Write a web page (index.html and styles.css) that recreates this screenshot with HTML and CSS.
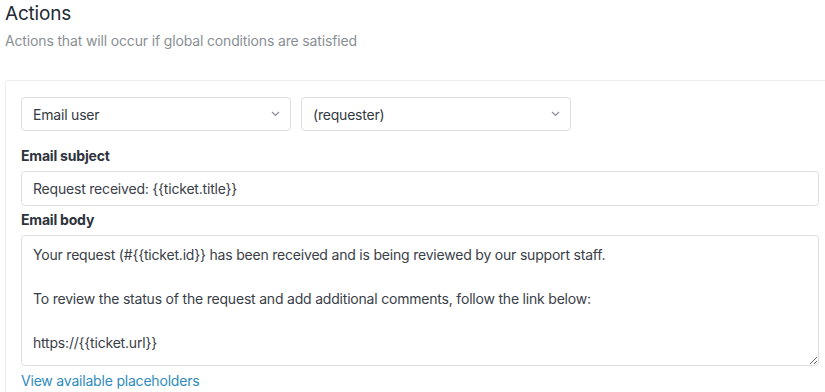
FILE: index.html
```html
<!DOCTYPE html>
<html>
<head>
<meta charset="utf-8">
<link rel="stylesheet" href="styles.css">
</head>
<body>
<div class="page">
  <h2 class="title">Actions</h2>
  <p class="subtitle">Actions that will occur if global conditions are satisfied</p>
  <div class="card">
    <div class="selects">
      <div class="select"><span>Email user</span><svg class="chev" width="9" height="6" viewBox="0 0 9 6"><path d="M1 1l3.5 3.5L8 1" fill="none" stroke="#8a8f96" stroke-width="1.2"/></svg></div>
      <div class="select"><span>(requester)</span><svg class="chev" width="9" height="6" viewBox="0 0 9 6"><path d="M1 1l3.5 3.5L8 1" fill="none" stroke="#8a8f96" stroke-width="1.2"/></svg></div>
    </div>
    <label class="label">Email subject</label>
    <div class="input">Request received: {{ticket.title}}</div>
    <label class="label">Email body</label>
    <textarea class="textarea">Your request (#{{ticket.id}} has been received and is being reviewed by our support staff.

To review the status of the request and add additional comments, follow the link below:

https://{{ticket.url}}</textarea>
    <a class="link" href="#">View available placeholders</a>
  </div>
</div>
</body>
</html>
```
FILE: styles.css
```css
html, body {
  margin: 0;
  padding: 0;
  overflow: hidden;
  background: #fff;
}
body {
  font-family: Inter, "Liberation Sans", sans-serif;
  color: #333a42;
  letter-spacing: -0.2px;
}
.page {
  padding: 0 0 0 5px;
  width: 830px;
}
.title {
  margin: 0;
  padding-top: 2px;
  font-size: 19px;
  font-weight: 400;
  line-height: 24px;
  color: #222a33;
}
.subtitle {
  margin: 6px 0 0;
  font-size: 14px;
  line-height: 18px;
  color: #8a8f95;
  letter-spacing: -0.15px;
}
.card {
  margin-top: 30px;
  border: 1px solid #ececec;
  border-radius: 3px;
  padding: 16px 15px 0;
  height: 330px;
}
.selects {
  display: flex;
  gap: 10px;
}
.select {
  box-sizing: border-box;
  width: 270px;
  height: 34px;
  border: 1px solid #dedede;
  border-radius: 4px;
  display: flex;
  align-items: center;
  justify-content: space-between;
  padding: 0 10px 0 11px;
  font-size: 14px;
  color: #333a42;
}
.chev { display: block; }
.label {
  display: block;
  margin-top: 16px;
  font-size: 14px;
  font-weight: 700;
  line-height: 18px;
  color: #2c333b;
}
.label + .input, .label + .textarea { margin-top: 6px; }
.input {
  box-sizing: border-box;
  width: 798px;
  height: 35px;
  border: 1px solid #dedede;
  border-radius: 4px;
  padding: 0 11px;
  display: flex;
  align-items: center;
  font-size: 14px;
  color: #3a4048;
}
.input + .label { margin-top: 5px; }
.textarea {
  display: block;
  box-sizing: border-box;
  width: 798px;
  height: 131px;
  margin: 0;
  border: 1px solid #dedede;
  border-radius: 4px;
  padding: 8px 11px;
  font-family: Inter, "Liberation Sans", sans-serif;
  font-size: 14px;
  letter-spacing: -0.2px;
  line-height: 22px;
  color: #3a4048;
  resize: vertical;
  outline: none;
}
.link {
  display: block;
  margin-top: 6px;
  font-size: 14px;
  line-height: 18px;
  color: #2f8bbd;
  text-decoration: none;
}
```
